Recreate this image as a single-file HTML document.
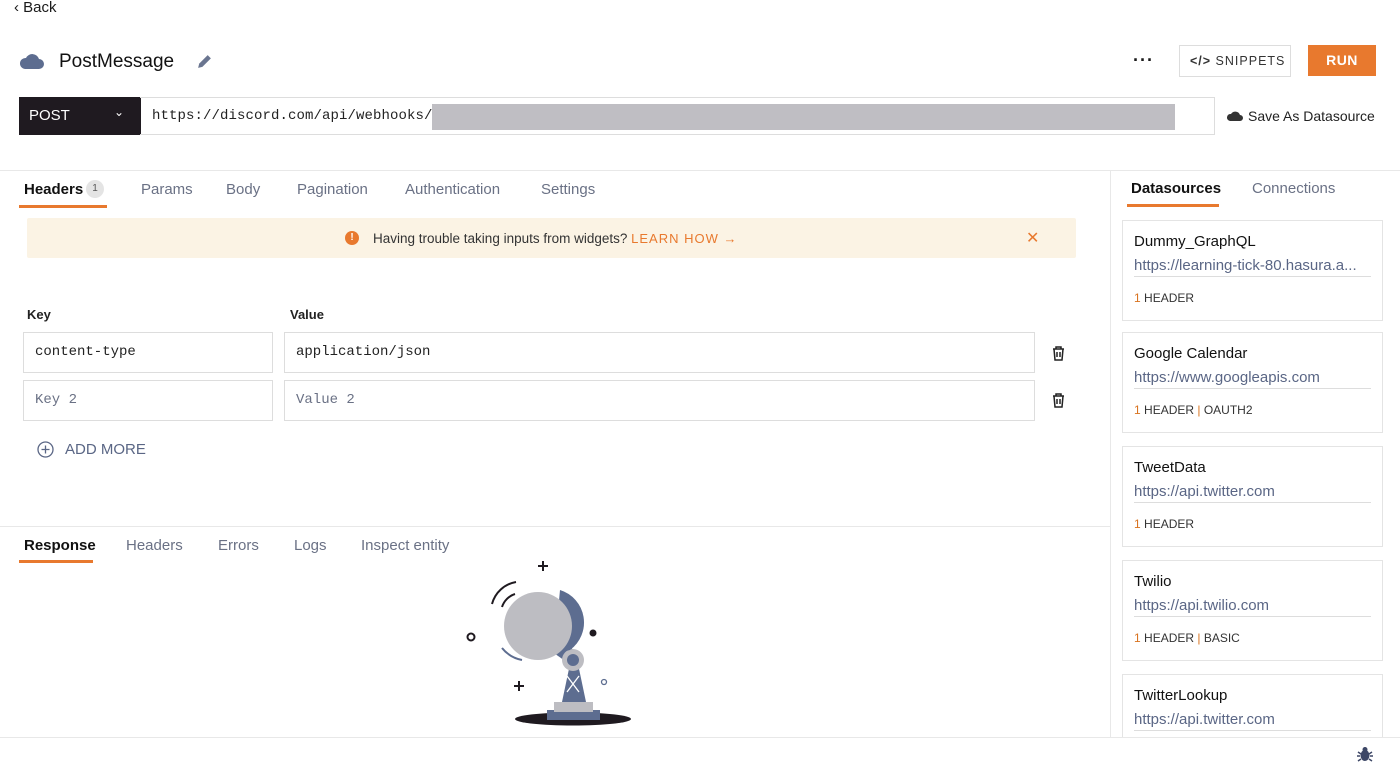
<!DOCTYPE html>
<html><head><meta charset="utf-8"><style>
*{box-sizing:border-box;margin:0;padding:0}
body{width:1400px;height:770px;overflow:hidden;background:#fff;font-family:"Liberation Sans",sans-serif;color:#1a1a1a;position:relative}
.a{position:absolute;white-space:nowrap}
.mono{font-family:"Liberation Mono",monospace}
.tab{font-size:15px;color:#6a7185}
.card{position:absolute;left:1122px;width:261px;height:101px;border:1px solid #e4e4e4;background:#fff}
.card .n{position:absolute;left:11px;top:12px;font-size:15px;color:#111}
.card .u{position:absolute;left:11px;top:36px;width:237px;font-size:15px;color:#5a6685;border-bottom:1px solid #ddd;padding-bottom:2px;overflow:hidden}
.card .h{position:absolute;left:11px;top:70px;font-size:12px;color:#333}
.card .h b{color:#d9731f;font-weight:normal}
.inp{position:absolute;border:1px solid #ddd;height:41px;font-family:"Liberation Mono",monospace;font-size:14px;padding:11px 11px;color:#222}
</style></head><body>
<div class="a" style="left:14px;top:-1px;font-size:15px">&#8249; Back</div>
<svg class="a" style="left:19px;top:52px" width="25" height="18" viewBox="0 0 25 18"><path d="M6 17h14a5 5 0 0 0 0-10 7 7 0 0 0-13-1A5.5 5.5 0 0 0 6 17z" fill="#5d6d90"/></svg>
<div class="a" style="left:59px;top:51px;font-size:19px;color:#111">PostMessage</div>
<svg class="a" style="left:196px;top:53px" width="17" height="17" viewBox="0 0 16 16"><path d="M2 14l1-4 8-8 3 3-8 8z" fill="#6a7590"/></svg>
<div class="a" style="left:1133px;top:50px;font-size:18px;font-weight:bold;letter-spacing:1px">···</div>
<div class="a" style="left:1179px;top:45px;width:112px;height:32px;border:1px solid #ddd;font-size:12.5px;letter-spacing:1px;color:#333;padding:8px 0 0 10px"><b>&lt;/&gt;</b> SNIPPETS</div>
<div class="a" style="left:1308px;top:45px;width:68px;height:31px;background:#e8792e;color:#fff;font-size:14px;font-weight:bold;text-align:center;line-height:31px;letter-spacing:.5px">RUN</div>
<div class="a" style="left:19px;top:97px;width:122px;height:38px;background:#1f1a20;color:#fff;font-size:15px;padding:10px 0 0 10px">POST<span style="position:absolute;left:95px;top:8px;font-size:12px">&#8964;</span></div>
<div class="a" style="left:140px;top:97px;width:1075px;height:38px;border:1px solid #ddd;border-left:none"></div>
<div class="a mono" style="left:152px;top:108px;font-size:14px;color:#222;letter-spacing:0.1px">https://discord.com/api/webhooks/</div>
<div class="a" style="left:432px;top:104px;width:743px;height:26px;background:#bfbec3"></div>
<svg class="a" style="left:1227px;top:108px" width="16" height="14" viewBox="0 0 16 14"><path d="M3 13h10a3 3 0 0 0 0-6 5 5 0 0 0-9-1A3.5 3.5 0 0 0 3 13z" fill="#333"/></svg>
<div class="a" style="left:1248px;top:108px;font-size:14px;color:#222">Save As Datasource</div>
<div class="a" style="left:0;top:170px;width:1400px;border-top:1px solid #e8e8e8"></div>
<div class="a" style="left:1110px;top:170px;height:567px;border-left:1px solid #e8e8e8"></div>
<div class="a" style="left:24px;top:181px;font-size:15px;font-weight:bold;color:#111">Headers</div>
<div class="a" style="left:86px;top:180px;width:18px;height:18px;border-radius:50%;background:#e4e4e4;font-size:10px;text-align:center;line-height:18px;color:#555">1</div>
<div class="a" style="left:19px;top:205px;width:88px;height:3px;background:#e8792e"></div>
<div class="a tab" style="left:141px;top:181px">Params</div>
<div class="a tab" style="left:226px;top:181px">Body</div>
<div class="a tab" style="left:297px;top:181px">Pagination</div>
<div class="a tab" style="left:405px;top:181px">Authentication</div>
<div class="a tab" style="left:541px;top:181px">Settings</div>
<div class="a" style="left:27px;top:218px;width:1049px;height:40px;background:#fbf3e4;border-radius:2px"></div>
<div class="a" style="left:345px;top:231px;width:14px;height:14px;border-radius:50%;background:#e8792e;color:#fff;font-size:10px;font-weight:bold;text-align:center;line-height:14px">!</div>
<div class="a" style="left:373px;top:231px;font-size:13.5px;color:#333">Having trouble taking inputs from widgets? <span style="color:#e8792e;letter-spacing:1px;font-size:13px">LEARN HOW &#8594;</span></div>
<div class="a" style="left:1026px;top:228px;font-size:16px;color:#e8792e">&#10005;</div>
<div class="a" style="left:27px;top:307px;font-size:13px;font-weight:bold;color:#222">Key</div>
<div class="a" style="left:290px;top:307px;font-size:13px;font-weight:bold;color:#222">Value</div>
<div class="inp" style="left:23px;top:332px;width:250px">content-type</div>
<div class="inp" style="left:284px;top:332px;width:751px">application/json</div>
<div class="inp" style="left:23px;top:380px;width:250px;color:#6a7185">Key 2</div>
<div class="inp" style="left:284px;top:380px;width:751px;color:#6a7185">Value 2</div>
<svg class="a" style="left:1051px;top:345px" width="15" height="16" viewBox="0 0 15 16"><path d="M2 4h11M5 4V2h5v2M3 4l1 11h7l1-11M6 7v5M9 7v5" fill="none" stroke="#222" stroke-width="1.5"/></svg>
<svg class="a" style="left:1051px;top:392px" width="15" height="16" viewBox="0 0 15 16"><path d="M2 4h11M5 4V2h5v2M3 4l1 11h7l1-11M6 7v5M9 7v5" fill="none" stroke="#222" stroke-width="1.5"/></svg>
<svg class="a" style="left:37px;top:441px" width="17" height="17" viewBox="0 0 17 17"><circle cx="8.5" cy="8.5" r="7.5" fill="none" stroke="#5a6685" stroke-width="1.3"/><path d="M8.5 4.5v8M4.5 8.5h8" stroke="#5a6685" stroke-width="1.3"/></svg>
<div class="a" style="left:65px;top:441px;font-size:15px;color:#5a6685">ADD MORE</div>
<div class="a" style="left:0;top:526px;width:1110px;border-top:1px solid #e8e8e8"></div>
<div class="a" style="left:24px;top:537px;font-size:15px;font-weight:bold;color:#111">Response</div>
<div class="a" style="left:19px;top:560px;width:74px;height:3px;background:#e8792e"></div>
<div class="a tab" style="left:126px;top:537px">Headers</div>
<div class="a tab" style="left:218px;top:537px">Errors</div>
<div class="a tab" style="left:294px;top:537px">Logs</div>
<div class="a tab" style="left:361px;top:537px">Inspect entity</div>
<svg class="a" style="left:440px;top:550px" width="220" height="190" viewBox="0 0 220 190">
<ellipse cx="133" cy="169" rx="58" ry="6.5" fill="#1f1a20"/>
<rect x="107" y="160" width="53" height="10" fill="#5d6d90"/>
<rect x="114" y="152" width="39" height="10" fill="#bdbdc2"/>
<path d="M122 152l8-38h8l8 38z" fill="#5d6d90"/>
<path d="M127 126l12 16M139 126l-12 16" stroke="#fff" stroke-width="1.3"/>
<rect x="116" y="96" width="20" height="14" fill="#5d6d90" transform="rotate(35 126 103)"/>
<circle cx="133" cy="110" r="11" fill="#bdbdc2"/><circle cx="133" cy="110" r="6" fill="#5d6d90"/>
<path d="M120 40a34 34 0 0 1 10 60l-16 4z" fill="#5d6d90"/>
<circle cx="98" cy="76" r="34" fill="#bdbdc2"/>
<path d="M62 98a34 34 0 0 0 20 12" fill="none" stroke="#5d6d90" stroke-width="2"/>
<path d="M52 54a30 30 0 0 1 24-22M62 57a20 20 0 0 1 13-13" fill="none" stroke="#1f1a20" stroke-width="2"/>
<path d="M103 11v10M98 16h10M79 131v10M74 136h10" stroke="#1f1a20" stroke-width="2"/>
<circle cx="31" cy="87" r="3.5" fill="none" stroke="#1f1a20" stroke-width="2"/>
<circle cx="153" cy="83" r="3.5" fill="#1f1a20"/>
<circle cx="164" cy="132" r="2.5" fill="none" stroke="#5d6d90" stroke-width="1.3"/>
</svg>
<div class="a" style="left:1131px;top:180px;font-size:15px;font-weight:bold;color:#111">Datasources</div>
<div class="a" style="left:1127px;top:204px;width:92px;height:3px;background:#e8792e"></div>
<div class="a tab" style="left:1252px;top:180px">Connections</div>
<div class="card" style="top:220px"><div class="n">Dummy_GraphQL</div><div class="u">https://learning-tick-80.hasura.a...</div><div class="h"><b>1</b> HEADER</div></div>
<div class="card" style="top:332px"><div class="n">Google Calendar</div><div class="u">https://www.googleapis.com</div><div class="h"><b>1</b> HEADER <b>|</b> OAUTH2</div></div>
<div class="card" style="top:446px"><div class="n">TweetData</div><div class="u">https://api.twitter.com</div><div class="h"><b>1</b> HEADER</div></div>
<div class="card" style="top:560px"><div class="n">Twilio</div><div class="u">https://api.twilio.com</div><div class="h"><b>1</b> HEADER <b>|</b> BASIC</div></div>
<div class="card" style="top:674px;height:70px"><div class="n">TwitterLookup</div><div class="u">https://api.twitter.com</div></div>
<div class="a" style="left:0;top:737px;width:1400px;height:33px;background:#fff;border-top:1px solid #e8e8e8"></div>
<svg class="a" style="left:1356px;top:745px" width="18" height="18" viewBox="0 0 18 18"><ellipse cx="9" cy="10.5" rx="4.5" ry="5.5" fill="#3d4766"/><circle cx="9" cy="4.5" r="2.5" fill="#3d4766"/><path d="M2 7l3 2M16 7l-3 2M1 11h3M17 11h-3M2 16l3-2M16 16l-3-2" stroke="#3d4766" stroke-width="1.5"/></svg>
</body></html>
